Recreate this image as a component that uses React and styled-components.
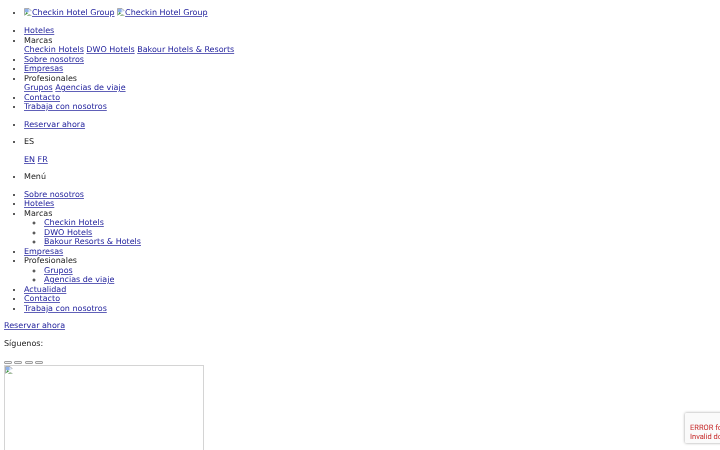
import React from "react";
import styled, { createGlobalStyle } from "styled-components";

const GlobalStyle = createGlobalStyle`
  html, body {
    margin: 0;
    height: 450px;
    overflow: hidden;
    background: #fff;
  }
  body {
    padding: 4px;
    box-sizing: border-box;
    font-family: "DejaVu Sans", sans-serif;
    font-size: 8px;
    line-height: 9.5px;
    color: #222;
    text-rendering: geometricPrecision;
  }
`;

const Page = styled.div`
  filter: blur(0.3px);
`;

const Link = styled.a`
  color: #1c1c9a;
  text-decoration: underline;
  text-decoration-color: rgba(28, 28, 154, 0.7);
`;

const List = styled.ul`
  list-style: disc;
  margin: ${(p) => p.$margin || "8px 0"};
  padding: 0 0 0 20px;
`;

const SubList = styled.ul`
  list-style: circle;
  margin: 0;
  padding: 0 0 0 20px;
`;

const Para = styled.p`
  margin: ${(p) => p.$margin || "8px 0"};
`;

const Buttons = styled.div`
  display: flex;
  gap: 2.3px;
  height: 4px;
  margin-top: 12.5px;
`;

const SlideButton = styled.button`
  width: 8px;
  height: 3.5px;
  padding: 0;
  border: 1px solid #a0a0a0;
  border-radius: 1px;
  background: #efefef;
`;

const Broken = styled.svg`
  width: 8px;
  height: 8px;
  display: ${(p) => (p.$inline ? "inline-block" : "block")};
  vertical-align: -1px;
`;

const ImageFrame = styled.div`
  width: 200px;
  height: 150px;
  box-sizing: border-box;
  border: 1px solid #d4d4d4;
`;

const Recaptcha = styled.div`
  position: fixed;
  left: 685px;
  top: 413px;
  width: 128px;
  height: 30px;
  box-sizing: border-box;
  padding: 10px 0 0 5px;
  background: #fafafa;
  border-radius: 1px;
  box-shadow: 0 0 3px rgba(0, 0, 0, 0.4);
  color: #c62828;
  font-family: Roboto, sans-serif;
  font-size: 7.5px;
  line-height: 9px;
  white-space: nowrap;
  filter: blur(0.25px);
`;

const BrokenIcon = ({ inline }) => (
  <Broken viewBox="0 0 16 16" $inline={inline}>
    <path d="M1 1h9l5 5v9H1z" fill="#dfe8f8" stroke="#8f8f8f" strokeWidth="1.4" />
    <path d="M2 2h7v6H2z" fill="#8fb2ec" />
    <path d="M2 14l3-6 4 3 2-1 3 4z" fill="#3f9a3a" />
    <path d="M0 16L16 5v11z" fill="#fff" />
    <path d="M6 16l4-3 5 2" fill="#7fb874" stroke="#8f8f8f" strokeWidth="1" />
  </Broken>
);

export default function App() {
  return (
    <>
      <GlobalStyle />
      <Page>
        <List $margin="4px 0 8.5px">
          <li>
            <Link href="#"><BrokenIcon inline />Checkin Hotel Group</Link>{" "}
            <Link href="#"><BrokenIcon inline />Checkin Hotel Group</Link>
          </li>
        </List>
        <List>
          <li><Link href="#">Hoteles</Link></li>
          <li>
            Marcas
            <div>
              <Link href="#">Checkin Hotels</Link> <Link href="#">DWO Hotels</Link>{" "}
              <Link href="#">Bakour Hotels &amp; Resorts</Link>
            </div>
          </li>
          <li><Link href="#">Sobre nosotros</Link></li>
          <li><Link href="#">Empresas</Link></li>
          <li>
            Profesionales
            <div>
              <Link href="#">Grupos</Link> <Link href="#">Agencias de viaje</Link>
            </div>
          </li>
          <li><Link href="#">Contacto</Link></li>
          <li><Link href="#">Trabaja con nosotros</Link></li>
        </List>
        <List>
          <li><Link href="#">Reservar ahora</Link></li>
        </List>
        <List>
          <li>
            ES
            <Para><Link href="#">EN</Link> <Link href="#">FR</Link></Para>
          </li>
        </List>
        <List>
          <li>Menú</li>
        </List>
        <List>
          <li><Link href="#">Sobre nosotros</Link></li>
          <li><Link href="#">Hoteles</Link></li>
          <li>
            Marcas
            <SubList>
              <li><Link href="#">Checkin Hotels</Link></li>
              <li><Link href="#">DWO Hotels</Link></li>
              <li><Link href="#">Bakour Resorts &amp; Hotels</Link></li>
            </SubList>
          </li>
          <li><Link href="#">Empresas</Link></li>
          <li>
            Profesionales
            <SubList>
              <li><Link href="#">Grupos</Link></li>
              <li><Link href="#">Agencias de viaje</Link></li>
            </SubList>
          </li>
          <li><Link href="#">Actualidad</Link></li>
          <li><Link href="#">Contacto</Link></li>
          <li><Link href="#">Trabaja con nosotros</Link></li>
        </List>
        <Para><Link href="#">Reservar ahora</Link></Para>
        <Para>Síguenos:</Para>
        <Buttons>
          <SlideButton /><SlideButton /><SlideButton /><SlideButton />
        </Buttons>
        <ImageFrame><BrokenIcon /></ImageFrame>
      </Page>
      <Recaptcha>ERROR for site owner:<br />Invalid domain for site key</Recaptcha>
    </>
  );
}
